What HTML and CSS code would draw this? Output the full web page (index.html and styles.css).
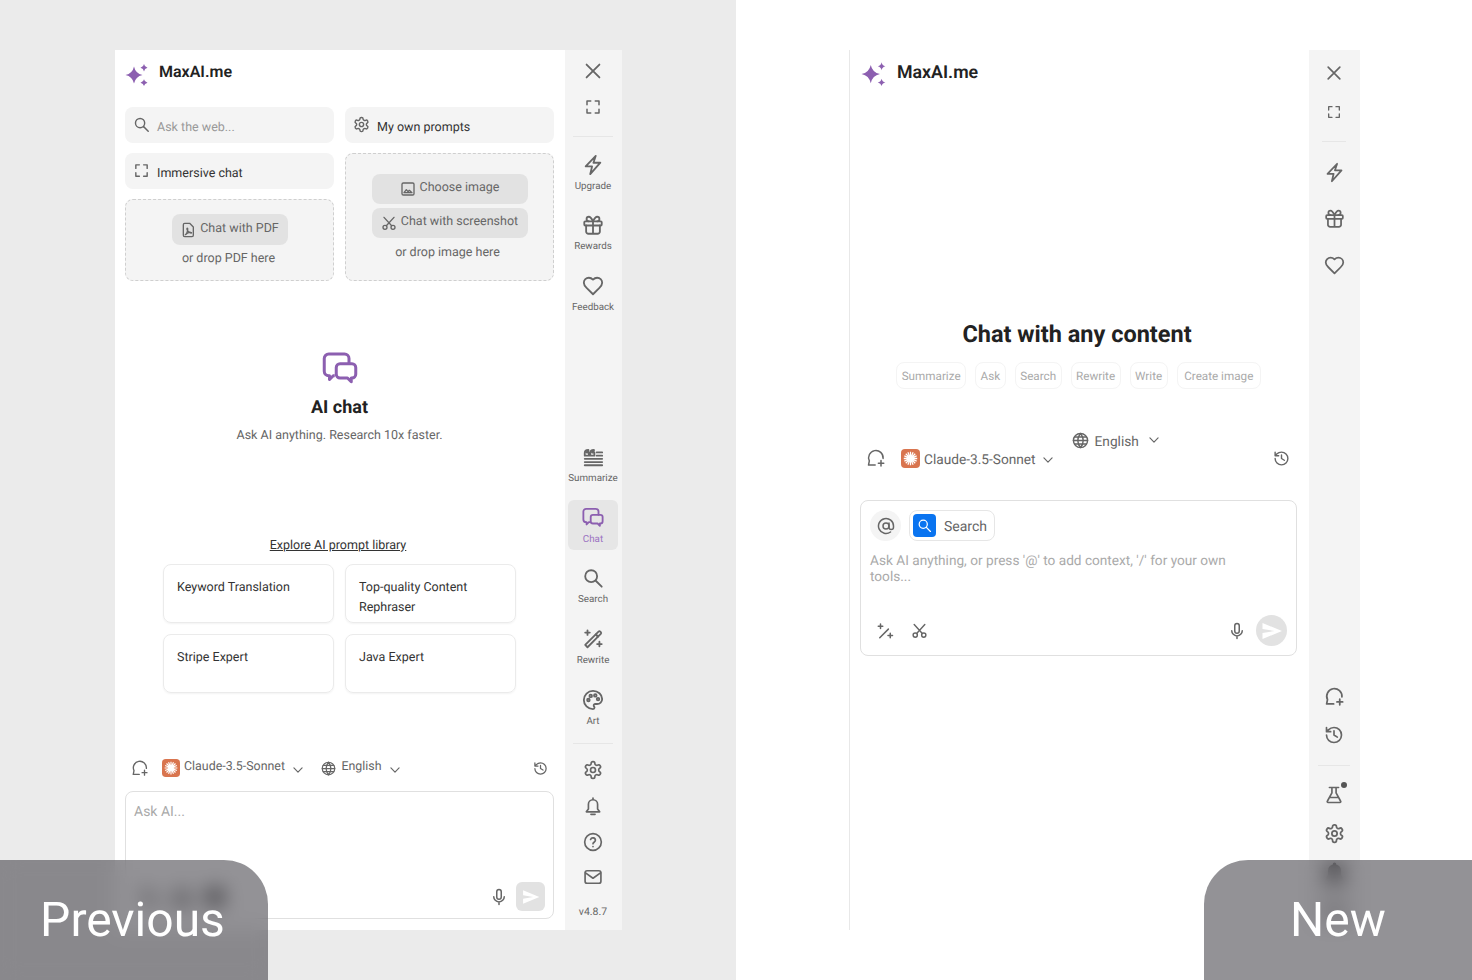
FILE: index.html
```html
<!DOCTYPE html>
<html lang="en">
<head>
  <meta charset="UTF-8">
  <title>MaxAI.me - Previous and New</title>
  <link rel="stylesheet" href="styles.css">
</head>
<body>

  <svg class="icon-defs" xmlns="http://www.w3.org/2000/svg">
    <symbol id="i-logo" viewBox="0 0 24 24"><path d="M9 4.5Q10.5 11.5 17.5 13 10.5 14.5 9 21.5 7.5 14.5 .5 13 7.500 11.5 9 4.5z"/><path d="M19 2Q19.5 5 22.5 5.7 19.5 6.4 19 9.4 18.5 6.400 15.5 5.7 18.5 5 19 2z"/><path d="M19 17.3Q19.5 20 22.5 20.7 19.5 21.4 19 24 18.5 21.4 15.5 20.7 18.5 20 19 17.3z"/></symbol>
    <symbol id="i-close" viewBox="0 0 24 24"><path d="M5 5l14 14M19 5L5 19"/></symbol>
    <symbol id="i-expand" viewBox="0 0 24 24"><path d="M4 9V4h5M15 4h5v5M20 15v5h-5M9 20H4v-5"/></symbol>
    <symbol id="i-bolt" viewBox="0 0 24 24"><path d="M15 2 4 13.5h7L9 22l11-12.5h-7.5z"/></symbol>
    <symbol id="i-gift" viewBox="0 0 24 24"><rect x="2.5" y="8" width="19" height="4.5" rx="1"/><path d="M12 8v13.5M19.5 12.5V19a2.500 2.500 0 0 1-2.500 2.500H7A2.500 2.500 0 0 1 4.500 19v-6.500M7.500 8a2.500 2.500 0 0 1 0-5C9.500 3 12 8 12 8s2.500-5 4.500-5a2.500 2.500 0 0 1 0 5"/></symbol>
    <symbol id="i-heart" viewBox="0 0 24 24"><path d="M19 14c1.49-1.46 3-3.21 3-5.5A5.5 5.5 0 0 0 16.5 3c-1.76 0-3 .5-4.5 2-1.5-1.5-2.74-2-4.5-2A5.5 5.5 0 0 0 2 8.5c0 2.3 1.5 4.05 3 5.5l7 7z"/></symbol>
    <symbol id="i-summarize" viewBox="0 0 24 24"><path class="thin" d="M3 14h19M3 17.500h19M3 21h19M16 7h6M16 10.500h6"/><path class="solid" d="M3 10.500V7.500C3 5.700 4 4.500 7 4.300v1.500C5.700 6 5.200 6.400 5.200 7.200H7.500v3.300zM9 10.500V7.500C9 5.700 10 4.500 13 4.300v1.500c-1.300.2-1.800.6-1.800 1.400h2.300v3.300z"/></symbol>
    <symbol id="i-chat" viewBox="0 0 24 24"><path d="M8.500 16.500H7.500L5 19v-2.500H4.500a3 3 0 0 1-3-3V5a3 3 0 0 1 3-3h10.500a3 3 0 0 1 3 3v3.500"/><path d="M12 8.500h8a2.500 2.500 0 0 1 2.500 2.500v4.500a2.500 2.500 0 0 1-2.500 2.500h-.5v2.500L17 18h-5a2.500 2.500 0 0 1-2.500-2.500V11A2.500 2.500 0 0 1 12 8.500z"/></symbol>
    <symbol id="i-search" viewBox="0 0 24 24"><circle cx="10" cy="10" r="6.5"/><path d="M15 15l6.5 6.5"/></symbol>
    <symbol id="i-rewrite" viewBox="0 0 24 24"><path d="M3.500 18.500 15 7l2.500 2.500L6 21z"/><path class="solid" d="M15 7l3-3a1.500 1.500 0 0 1 2 0l.5.5a1.500 1.500 0 0 1 0 2l-3 3z"/><path d="M6 2.500v5M3.500 5h5M19 15v5M16.500 17.500h5"/></symbol>
    <symbol id="i-art" viewBox="0 0 24 24"><path d="M12 2C6.500 2 2 6.500 2 12s4.500 10 10 10c.926 0 1.648-.746 1.648-1.688 0-.437-.18-.835-.437-1.125-.29-.289-.438-.652-.438-1.125a1.640 1.640 0 0 1 1.668-1.668h1.996c3.051 0 5.555-2.503 5.555-5.554C21.965 6.012 17.461 2 12 2z"/><circle class="solid" cx="7" cy="12" r="1.4"/><circle class="solid" cx="9.5" cy="7.5" r="1.4"/><circle class="solid" cx="14.5" cy="7" r="1.4"/><circle class="solid" cx="17.5" cy="11" r="1.4"/></symbol>
    <symbol id="i-gear" viewBox="0 0 24 24"><path d="M12.22 2h-.44a2 2 0 0 0-2 2v.18a2 2 0 0 1-1 1.73l-.43.25a2 2 0 0 1-2 0l-.15-.08a2 2 0 0 0-2.73.73l-.22.38a2 2 0 0 0 .73 2.73l.15.1a2 2 0 0 1 1 1.72v.51a2 2 0 0 1-1 1.74l-.15.09a2 2 0 0 0-.73 2.73l.22.38a2 2 0 0 0 2.73.73l.15-.08a2 2 0 0 1 2 0l.43.25a2 2 0 0 1 1 1.73V20a2 2 0 0 0 2 2h.44a2 2 0 0 0 2-2v-.18a2 2 0 0 1 1-1.73l.43-.25a2 2 0 0 1 2 0l.15.08a2 2 0 0 0 2.73-.73l.22-.39a2 2 0 0 0-.73-2.73l-.15-.08a2 2 0 0 1-1-1.74v-.5a2 2 0 0 1 1-1.74l.15-.09a2 2 0 0 0 .73-2.73l-.22-.38a2 2 0 0 0-2.73-.73l-.15.08a2 2 0 0 1-2 0l-.43-.25a2 2 0 0 1-1-1.73V4a2 2 0 0 0-2-2z"/><circle cx="12" cy="12" r="3"/></symbol>
    <symbol id="i-bell" viewBox="0 0 24 24"><path d="M6.500 15.500V10a5.500 5.500 0 0 1 11 0v5.500L20 19H4zM12 4.500V2.500M9.500 22h5"/></symbol>
    <symbol id="i-help" viewBox="0 0 24 24"><circle cx="12" cy="12" r="10"/><path d="M9.100 9a3 3 0 0 1 5.800 1c0 2-2.900 2.500-2.900 4M12 17.500v.2"/></symbol>
    <symbol id="i-mail" viewBox="0 0 24 24"><rect x="2.5" y="4.5" width="19" height="15" rx="2.5"/><path d="M3 7l9 6.500L21 7"/></symbol>
    <symbol id="i-newchat" viewBox="0 0 24 24"><path d="M20.500 12.500A8.700 8.700 0 1 0 4 15.500L3 20.500h8"/><path d="M18 15v6.500M14.800 18.200h6.500"/></symbol>
    <symbol id="i-history" viewBox="0 0 24 24"><path d="M3 12a9 9 0 1 0 9-9 9.75 9.75 0 0 0-6.74 2.74L3 8M3 3v5h5M12 7v5l4 2.500"/></symbol>
    <symbol id="i-globe" viewBox="0 0 24 24"><circle cx="12" cy="12" r="10"/><path d="M2 12h20M3.500 7h17M3.500 17h17M12 2a15 15 0 0 1 0 20 15 15 0 0 1 0-20z"/></symbol>
    <symbol id="i-chevron" viewBox="0 0 24 24"><path d="M5 8.500l7 7 7-7"/></symbol>
    <symbol id="i-mic" viewBox="0 0 24 24"><rect x="9" y="2" width="6" height="13" rx="3"/><path d="M5 11.500a7 7 0 0 0 14 0M12 18.500V22"/></symbol>
    <symbol id="i-send" viewBox="0 0 24 24"><path class="solid" d="M2.500 4 22 12 2.500 20v-6l12-2-12-2z"/></symbol>
    <symbol id="i-at" viewBox="0 0 24 24"><circle cx="12" cy="12" r="4"/><path d="M16 8v5.500a3 3 0 0 0 6 0V12a10 10 0 1 0-4 8"/></symbol>
    <symbol id="i-scissors" viewBox="0 0 24 24"><circle cx="6" cy="18.500" r="3"/><circle cx="18" cy="18.500" r="3"/><path d="M8 16.200 19.500 3.500M16 16.200 4.500 3.500"/></symbol>
    <symbol id="i-image" viewBox="0 0 24 24"><rect x="3" y="3" width="18" height="18" rx="2"/><path class="solid" d="M6 17.500l3.500-4.500 2.500 3 2-2 4 3.500z"/></symbol>
    <symbol id="i-pdf" viewBox="0 0 24 24"><path d="M7 2h7.500L20 7.500V20a2 2 0 0 1-2 2H7a2 2 0 0 1-2-2V4a2 2 0 0 1 2-2zM8 19c2-1 4-6 3.500-9-.2-1.500-1.500-.5-1 1 .8 3 3.500 5 6 5.500 1 .2 1-1 0-1-3-.2-6 1-8.500 3.500z"/></symbol>
    <symbol id="i-wand" viewBox="0 0 24 24"><path d="M5 21 16.500 9.500"/><path d="M6 2.500v6M3 5.500h6M19 15v6M16 18h6"/></symbol>
    <symbol id="i-flask" viewBox="0 0 24 24"><path d="M6.500 3h11M9.500 3v6.500L4 19.500A1 1 0 0 0 5 21h14a1 1 0 0 0 1-1.500L14.500 9.500V3M7 15h10"/></symbol>
    <symbol id="i-claude" viewBox="0 0 24 24"><rect class="claude-tile" width="24" height="24" rx="5"/><path class="claude-rays" d="M12 3.500v17M3.500 12h17M6 6l12 12M18 6 6 18M8.700 4.200l6.600 15.600M15.300 4.200 8.700 19.800M4.200 8.700l15.600 6.600M19.800 8.700 4.200 15.300"/></symbol>
  </svg>

  <div class="compare">

    <section class="pane pane-old">
      <div class="panel panel-old">
        <div class="old-main">
          <header class="brand">
            <svg class="brand-logo"><use href="#i-logo"/></svg>
            <span class="brand-name">MaxAI.me</span>
          </header>

          <div class="tool-grid">
            <div class="tool-col">
              <div class="tool-btn muted">
                <svg class="ico ico-17"><use href="#i-search"/></svg>
                <span>Ask the web...</span>
              </div>
              <div class="tool-btn">
                <svg class="ico ico-17"><use href="#i-expand"/></svg>
                <span>Immersive chat</span>
              </div>
              <div class="drop drop-pdf">
                <div class="drop-btn">
                  <svg class="ico ico-16"><use href="#i-pdf"/></svg>
                  <span>Chat with PDF</span>
                </div>
                <p class="drop-note">or drop PDF here</p>
              </div>
            </div>
            <div class="tool-col">
              <div class="tool-btn">
                <svg class="ico ico-17"><use href="#i-gear"/></svg>
                <span>My own prompts</span>
              </div>
              <div class="drop drop-img">
                <div class="drop-btn wide">
                  <svg class="ico ico-16"><use href="#i-image"/></svg>
                  <span>Choose image</span>
                </div>
                <div class="drop-btn wide">
                  <svg class="ico ico-16"><use href="#i-scissors"/></svg>
                  <span>Chat with screenshot</span>
                </div>
                <p class="drop-note">or drop image here</p>
              </div>
            </div>
          </div>

          <div class="intro">
            <svg class="intro-icon"><use href="#i-chat"/></svg>
            <h2>AI chat</h2>
            <p>Ask AI anything. Research 10x faster.</p>
          </div>

          <a class="library-link" href="#">Explore AI prompt library</a>

          <div class="prompt-grid">
            <div class="prompt-card">Keyword Translation</div>
            <div class="prompt-card">Top-quality Content Rephraser</div>
            <div class="prompt-card">Stripe Expert</div>
            <div class="prompt-card">Java Expert</div>
          </div>

          <div class="model-bar old-bar">
            <svg class="ico ico-18 new-chat"><use href="#i-newchat"/></svg>
            <svg class="claude"><use href="#i-claude"/></svg>
            <span class="model-name">Claude-3.5-Sonnet</span>
            <svg class="ico chev"><use href="#i-chevron"/></svg>
            <svg class="ico ico-15 old-globe"><use href="#i-globe"/></svg>
            <span class="model-name">English</span>
            <svg class="ico chev"><use href="#i-chevron"/></svg>
            <svg class="ico ico-15 bar-end"><use href="#i-history"/></svg>
          </div>

          <div class="composer old-composer">
            <p class="placeholder">Ask AI...</p>
            <div class="composer-foot">
              <svg class="ico ico-18 under-badge"><use href="#i-wand"/></svg>
              <svg class="ico ico-18 under-badge"><use href="#i-scissors"/></svg>
              <svg class="ico ico-18 under-badge"><use href="#i-at"/></svg>
              <svg class="ico ico-18 bar-end mic"><use href="#i-mic"/></svg>
              <span class="send-btn"><svg><use href="#i-send"/></svg></span>
            </div>
          </div>
        </div>

        <aside class="rail old-rail">
          <svg class="ico rail-close"><use href="#i-close"/></svg>
          <svg class="ico ico-18 rail-expand"><use href="#i-expand"/></svg>
          <hr class="rail-rule">
          <div class="rail-item"><svg class="ico"><use href="#i-bolt"/></svg><span>Upgrade</span></div>
          <div class="rail-item"><svg class="ico"><use href="#i-gift"/></svg><span>Rewards</span></div>
          <div class="rail-item"><svg class="ico"><use href="#i-heart"/></svg><span>Feedback</span></div>
          <div class="rail-item rail-push"><svg class="ico"><use href="#i-summarize"/></svg><span>Summarize</span></div>
          <div class="rail-item active"><svg class="ico"><use href="#i-chat"/></svg><span>Chat</span></div>
          <div class="rail-item"><svg class="ico"><use href="#i-search"/></svg><span>Search</span></div>
          <div class="rail-item"><svg class="ico"><use href="#i-rewrite"/></svg><span>Rewrite</span></div>
          <div class="rail-item"><svg class="ico"><use href="#i-art"/></svg><span>Art</span></div>
          <hr class="rail-rule low">
          <svg class="ico rail-small"><use href="#i-gear"/></svg>
          <svg class="ico rail-small"><use href="#i-bell"/></svg>
          <svg class="ico rail-small"><use href="#i-help"/></svg>
          <svg class="ico rail-small"><use href="#i-mail"/></svg>
          <span class="version">v4.8.7</span>
        </aside>
      </div>
      <div class="badge badge-old">Previous</div>
    </section>

    <section class="pane pane-new">
      <div class="panel panel-new">
        <div class="new-main">
          <header class="brand brand-new">
            <svg class="brand-logo"><use href="#i-logo"/></svg>
            <span class="brand-name">MaxAI.me</span>
          </header>

          <h1 class="hero">Chat with any content</h1>
          <div class="chips">
            <span class="chip">Summarize</span>
            <span class="chip">Ask</span>
            <span class="chip">Search</span>
            <span class="chip">Rewrite</span>
            <span class="chip">Write</span>
            <span class="chip">Create image</span>
          </div>

          <div class="model-bar new-bar">
            <svg class="ico ico-20 new-chat"><use href="#i-newchat"/></svg>
            <svg class="claude big"><use href="#i-claude"/></svg>
            <span class="model-name">Claude-3.5-Sonnet</span>
            <svg class="ico chev"><use href="#i-chevron"/></svg>
            <div class="lang-raised">
              <svg class="ico ico-17"><use href="#i-globe"/></svg>
              <span class="model-name">English</span>
              <svg class="ico chev"><use href="#i-chevron"/></svg>
            </div>
            <svg class="ico ico-17 bar-end"><use href="#i-history"/></svg>
          </div>

          <div class="composer new-composer">
            <div class="context-row">
              <span class="at-btn"><svg class="ico ico-18"><use href="#i-at"/></svg></span>
              <span class="context-chip">
                <span class="context-tile"><svg class="ico ico-15"><use href="#i-search"/></svg></span>
                <span class="context-label">Search</span>
              </span>
            </div>
            <p class="placeholder wrap">Ask AI anything, or press '@' to add context, '/' for your own tools...</p>
            <div class="composer-foot new-foot">
              <svg class="ico ico-18"><use href="#i-wand"/></svg>
              <svg class="ico ico-17"><use href="#i-scissors"/></svg>
              <svg class="ico ico-18 bar-end mic"><use href="#i-mic"/></svg>
              <span class="send-btn round"><svg><use href="#i-send"/></svg></span>
            </div>
          </div>
        </div>

        <aside class="rail new-rail">
          <svg class="ico ico-20 new-close"><use href="#i-close"/></svg>
          <svg class="ico ico-16 new-expand"><use href="#i-expand"/></svg>
          <hr class="rail-rule new-rule">
          <svg class="ico new-icon"><use href="#i-bolt"/></svg>
          <svg class="ico new-icon spaced"><use href="#i-gift"/></svg>
          <svg class="ico new-icon spaced"><use href="#i-heart"/></svg>
          <svg class="ico new-icon rail-push new-chat-slot"><use href="#i-newchat"/></svg>
          <svg class="ico ico-20 new-history"><use href="#i-history"/></svg>
          <hr class="rail-rule new-rule low">
          <span class="flask-wrap">
            <svg class="ico ico-20"><use href="#i-flask"/></svg>
            <i class="flask-dot"></i>
          </span>
          <svg class="ico new-icon stacked"><use href="#i-gear"/></svg>
          <svg class="ico new-icon stacked under-badge"><use href="#i-bell"/></svg>
          <svg class="ico new-icon stacked"><use href="#i-help"/></svg>
        </aside>
      </div>
      <div class="badge badge-new">New</div>
    </section>

  </div>

</body>
</html>
```

FILE: styles.css
```css
* {
  box-sizing: border-box;
}

body {
  margin: 0;
  font-family: Roboto, "Liberation Sans", sans-serif;
  color: #222;
  overflow: hidden;
  text-rendering: geometricPrecision;
}

.icon-defs {
  display: none;
}

.compare {
  display: grid;
  grid-template-columns: 736px 736px;
  height: 980px;
}

.pane {
  position: relative;
  height: 980px;
  padding-top: 50px;
  overflow: hidden;
}

.pane-old {
  background: #ebebeb;
  padding-left: 115px;
}

.pane-new {
  background: #fff;
  padding-left: 113px;
}

.panel {
  display: flex;
  height: 880px;
}

.panel-old {
  width: 507px;
  background: #fff;
}

.panel-new {
  width: 511px;
  border-left: 1px solid #e8e8e8;
}

/* icons */
.ico {
  width: 22px;
  height: 22px;
  flex: none;
  fill: none;
  stroke: #666;
  stroke-width: 2;
  stroke-linecap: round;
  stroke-linejoin: round;
}

.ico .solid {
  fill: #666;
  stroke: none;
}

.ico .thin {
  stroke-width: 1.4;
  stroke-linecap: butt;
}

.ico-15 { width: 15px; height: 15px; }
.ico-16 { width: 16px; height: 16px; }
.ico-17 { width: 17px; height: 17px; }
.ico-18 { width: 18px; height: 18px; }
.ico-20 { width: 20px; height: 20px; }

/* the label blurs these down to soft dark spots */
.under-badge {
  fill: #444;
  stroke: #444;
  stroke-width: 4;
}

.claude-tile {
  fill: #d9754f;
  stroke: none;
}

.claude-rays {
  stroke: #fff;
  stroke-width: 1.6;
  fill: none;
}

/* header */
.brand {
  display: flex;
  align-items: center;
  gap: 10px;
  height: 43px;
}

.brand-logo {
  width: 24px;
  height: 24px;
  margin-top: 4px;
  fill: #8c5fb0;
}

.brand-name {
  font-size: 16px;
  font-weight: 600;
  color: #222;
}

/* previous panel */
.old-main {
  width: 450px;
  padding: 0 11px 0 10px;
  display: flex;
  flex-direction: column;
}

.tool-grid {
  display: grid;
  grid-template-columns: 209px 209px;
  gap: 11px;
  margin-top: 14px;
  height: 174px;
}

.tool-col {
  display: flex;
  flex-direction: column;
  gap: 10.7px;
}

.tool-btn {
  display: flex;
  align-items: center;
  gap: 7px;
  height: 35.5px;
  padding: 0 8px;
  background: #f4f4f4;
  border-radius: 8px;
  font-size: 12.5px;
  color: #333;
}

.tool-btn span {
  padding-top: 5px;
}

.tool-btn.muted {
  color: #999;
}

.drop {
  flex: 1;
  display: flex;
  flex-direction: column;
  align-items: center;
  background: #f4f4f4;
  border: 1px dashed #cfcfcf;
  border-radius: 8px;
  font-size: 12.5px;
}

.drop-pdf {
  padding-top: 14px;
  gap: 6.5px;
}

.drop-img {
  padding-top: 19.5px;
  gap: 3.5px;
}

.drop-btn {
  display: flex;
  align-items: center;
  justify-content: center;
  gap: 4px;
  width: 116px;
  height: 30.5px;
  background: #e2e2e2;
  border-radius: 8px;
  color: #666;
}

.drop-btn.wide {
  width: 156px;
}

.drop-btn span {
  margin-top: -3px;
}

.drop-note {
  margin: 0 2px 0 0;
  line-height: 15px;
  color: #666;
}

.drop-img .drop-note {
  margin: 3px 4px 0 0;
}

.intro {
  margin-top: 70px;
  text-align: center;
}

.intro-icon {
  display: block;
  width: 36px;
  height: 36px;
  margin: 0 auto;
  fill: none;
  stroke: #8c5fb0;
  stroke-width: 2;
  stroke-linejoin: round;
}

.intro h2 {
  margin: 9px 0 0;
  font-size: 18px;
  font-weight: 700;
  line-height: 24px;
}

.intro p {
  margin: 8px 0 0;
  font-size: 12.5px;
  line-height: 16px;
  color: #666;
}

.library-link {
  margin-top: 94px;
  margin-left: -3px;
  align-self: center;
  font-size: 12.5px;
  line-height: 16px;
  color: #333;
}

.prompt-grid {
  display: grid;
  grid-template-columns: 171px 171px;
  grid-auto-rows: 59px;
  gap: 11px;
  margin: 10px auto 0;
}

.prompt-card {
  padding: 12.5px 13px;
  border: 1px solid #ebebeb;
  border-radius: 8px;
  box-shadow: 0 1px 2px rgba(0, 0, 0, 0.05);
  font-size: 12.5px;
  line-height: 20px;
  color: #333;
}

.model-bar {
  display: flex;
  align-items: center;
  color: #666;
}

.old-bar {
  margin-top: 65px;
  height: 20px;
  padding: 0 6px;
}

.model-name {
  font-size: 12.4px;
  margin-top: -3px;
}

.new-chat {
  stroke-width: 1.8;
}

.claude {
  width: 18px;
  height: 18px;
  margin-left: 13px;
  margin-right: 4px;
  flex: none;
}

.chev {
  width: 14px;
  height: 14px;
  margin-left: 6.5px;
  margin-top: 3px;
}

.old-globe {
  margin-left: 16px;
  margin-right: 5px;
}

.bar-end {
  margin-left: auto;
}

.composer {
  border: 1px solid #e0e0e0;
  border-radius: 8px;
  display: flex;
  flex-direction: column;
  background: #fff;
}

.old-composer {
  margin-top: 13px;
  height: 128px;
  padding: 9px 8px 7px;
}

.placeholder {
  margin: 0;
  font-size: 14px;
  line-height: 22px;
  color: #aaa;
}

.composer-foot {
  margin-top: auto;
  display: flex;
  align-items: center;
  gap: 15px;
  padding-left: 6px;
}

.mic {
  margin-right: -7px;
}

.send-btn {
  display: flex;
  align-items: center;
  justify-content: center;
  width: 29px;
  height: 29px;
  background: #e2e2e2;
  border-radius: 6px;
}

.send-btn svg {
  width: 20px;
  height: 20px;
  fill: #fff;
}

.send-btn.round {
  width: 31px;
  height: 31px;
  border-radius: 50%;
}

.send-btn.round svg {
  width: 24px;
  height: 24px;
}

/* side rail */
.rail {
  display: flex;
  flex-direction: column;
  align-items: center;
  background: #f4f4f4;
}

.old-rail {
  width: 57px;
  padding: 10px 1px 12px 0;
}

.rail-close {
  margin-bottom: 16px;
}

.rail-expand {
  margin-bottom: 20px;
}

.rail-rule {
  width: 40px;
  height: 1px;
  margin: 0;
  border: 0;
  flex: none;
  background: #e6e6e6;
}

.old-rail .rail-rule {
  margin-bottom: 10px;
}

.old-rail .rail-rule.low {
  margin-bottom: 16px;
}

.rail-item {
  display: flex;
  flex-direction: column;
  align-items: center;
  gap: 5px;
  width: 50px;
  height: 50px;
  margin-bottom: 10.8px;
  padding-top: 6.5px;
  border-radius: 6px;
  font-size: 9.8px;
  line-height: 12px;
  color: #666;
}

.rail-item.active {
  background: #e6e6e6;
  color: #9b72c2;
}

.rail-item.active .ico {
  stroke: #8c5fb0;
}

.rail-push {
  margin-top: auto;
}

.rail-small {
  width: 20px;
  height: 20px;
  margin-bottom: 15.7px;
}

.version {
  font-size: 10.5px;
  line-height: 12px;
  color: #666;
  margin-top: 3px;
}

/* new panel */
.new-main {
  width: 459px;
  padding: 0 12px 0 10px;
  display: flex;
  flex-direction: column;
}

.brand-new {
  height: 43px;
  gap: 10px;
}

.brand-new .brand-logo {
  width: 26px;
  height: 26px;
  margin-top: 3px;
  margin-left: 1px;
}

.brand-new .brand-name {
  font-size: 17.8px;
  padding-top: 2px;
}

.hero {
  margin: 226px 3px 0 0;
  text-align: center;
  font-size: 23.5px;
  line-height: 30px;
  font-weight: 700;
}

.chips {
  display: flex;
  justify-content: center;
  gap: 9px;
  margin: 13px 0 0;
}

.chip {
  display: flex;
  align-items: center;
  height: 27px;
  padding: 0 4.5px;
  border: 1px solid #f4f4f4;
  border-radius: 8px;
  font-size: 11.7px;
  color: #aaa;
}

.chip:last-child {
  padding: 0 6.5px;
}

.new-bar {
  margin-top: 59px;
  height: 20px;
  padding: 0 7px 0 6px;
}

.new-bar .model-name {
  font-size: 13.7px;
  margin-top: 4px;
}

.claude.big {
  width: 19px;
  height: 19px;
  margin-left: 15px;
}

.new-bar .chev {
  margin-left: 5px;
}

.lang-raised {
  display: flex;
  align-items: center;
  gap: 5.5px;
  margin: -36px 0 0 17.5px;
}

.new-bar .lang-raised .model-name {
  margin-top: 3px;
}

.new-bar .lang-raised .chev {
  margin-left: 3px;
  margin-top: 0;
}

.new-composer {
  margin-top: 32px;
  height: 156px;
  padding: 9px;
}

.context-row {
  display: flex;
  gap: 8px;
}

.at-btn {
  display: flex;
  align-items: center;
  justify-content: center;
  width: 31px;
  height: 31px;
  padding-top: 1px;
  border-radius: 50%;
  background: #f4f4f4;
}

.context-chip {
  display: flex;
  align-items: center;
  gap: 8px;
  height: 31px;
  padding: 0 7px 0 3px;
  border: 1px solid #e6e6e6;
  border-radius: 8px;
  font-size: 14px;
  color: #666;
}

.context-label {
  padding-top: 3px;
}

.context-tile {
  display: flex;
  align-items: center;
  justify-content: center;
  width: 23px;
  height: 23px;
  background: #0a74f0;
  border-radius: 4px;
}

.context-tile .ico {
  stroke: #fff;
}

.placeholder.wrap {
  margin-top: 12px;
  max-width: 370px;
  font-size: 13.65px;
  line-height: 16px;
}

.new-foot {
  padding-left: 6px;
  gap: 16.5px;
}

.new-foot .mic {
  margin-right: -6px;
}

.new-rail {
  width: 51px;
  padding: 13px 1px 8.5px 0;
}

.new-close {
  margin-bottom: 21px;
}

.new-expand {
  margin-bottom: 21px;
}

.new-rule {
  width: 24px;
  margin-bottom: 19.5px;
}

.new-rule.low {
  width: 32px;
  margin-bottom: 19px;
}

.new-icon {
  width: 21px;
  height: 21px;
}

.new-icon.spaced {
  margin-top: 25.5px;
}

.new-chat-slot {
  margin-bottom: 17.5px;
}

.new-history {
  margin-bottom: 20px;
}

.new-icon.stacked {
  margin-top: 18px;
}

.flask-wrap {
  position: relative;
  display: flex;
}

.flask-dot {
  position: absolute;
  top: -3px;
  right: -3px;
  width: 6px;
  height: 6px;
  border-radius: 50%;
  background: #555;
}

/* corner labels */
.badge {
  position: absolute;
  bottom: 0;
  display: flex;
  align-items: center;
  justify-content: center;
  width: 268px;
  height: 120px;
  padding-bottom: 2px;
  background: rgba(40, 38, 45, 0.5);
  backdrop-filter: blur(10px);
  color: #fff;
  font-size: 48px;
  font-weight: 400;
}

.badge-old {
  left: 0;
  padding-right: 3px;
  border-top-right-radius: 44px;
}

.badge-new {
  right: 0;
  border-top-left-radius: 44px;
}
```
